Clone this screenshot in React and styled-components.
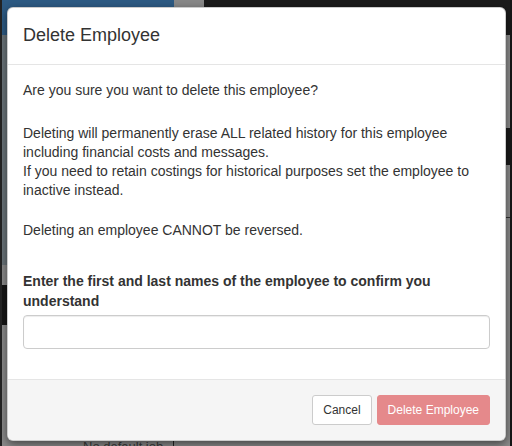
import React from "react";
import styled, { createGlobalStyle } from "styled-components";

const GlobalStyle = createGlobalStyle`
  html, body {
    margin: 0;
    padding: 0;
    overflow: hidden;
  }
  * {
    box-sizing: border-box;
  }
`;

const Page = styled.div`
  position: relative;
  width: 512px;
  height: 446px;
  overflow: hidden;
  display: grid;
  grid-template-rows: 35px 1fr;
  background: #8a8a8a;
  border-left: 2px solid #222;
  border-right: 2px solid #151515;
  font-family: "Liberation Sans", Arial, sans-serif;
`;

const Navbar = styled.div`
  display: flex;
`;

const NavBlock = styled.div`
  width: ${(p) => (p.$width ? `${p.$width}px` : "auto")};
  flex: ${(p) => (p.$width ? "none" : 1)};
  background: ${(p) => p.$tone};
`;

const Main = styled.div`
  display: flex;
  min-height: 0;
`;

const Sidebar = styled.div`
  width: 172px;
  display: flex;
  flex-direction: column;
  border-right: 1px solid #222;
`;

const SideBlock = styled.div`
  height: ${(p) => (p.$height ? `${p.$height}px` : "auto")};
  flex: ${(p) => (p.$height ? "none" : 1)};
  background: ${(p) => p.$tone};
`;

const SideLabel = styled.div`
  padding: 114px 0 0 81px;
  font-size: 13px;
  line-height: 16px;
  color: #3a3a3a;
  white-space: nowrap;
`;

const Content = styled.div`
  flex: 1;
  display: flex;
  flex-direction: column;
  align-items: flex-end;
`;

const EdgeBlock = styled.div`
  width: 6px;
  height: ${(p) => p.$height}px;
  margin-top: ${(p) => p.$top}px;
  background: ${(p) => p.$tone};
`;

const Modal = styled.div`
  position: absolute;
  top: 7px;
  left: 5px;
  width: 499px;
  background: #fff;
  border: 1px solid rgba(0, 0, 0, 0.2);
  border-radius: 6px;
  box-shadow: 0 3px 9px rgba(0, 0, 0, 0.5);
  overflow: hidden;
  color: #333;
`;

const Header = styled.div`
  padding: 15px;
  border-bottom: 1px solid #e5e5e5;
`;

const Title = styled.h4`
  margin: 0;
  font-size: 18px;
  font-weight: normal;
  line-height: 1.42857;
`;

const Body = styled.div`
  padding: 15px;
  font-size: 14px;
  line-height: 20px;
`;

const Para = styled.p`
  margin: 0 0 ${(p) => p.$gap}px;
  line-height: ${(p) => p.$lh || 20}px;
`;

const FormGroup = styled.div`
  margin-bottom: 15px;
`;

const Label = styled.label`
  display: block;
  font-weight: bold;
  margin-bottom: 4px;
`;

const Input = styled.input`
  display: block;
  width: 100%;
  height: 34px;
  padding: 6px 12px;
  font-size: 14px;
  font-family: inherit;
  border: 1px solid #ccc;
  border-radius: 4px;
  box-shadow: inset 0 1px 1px rgba(0, 0, 0, 0.075);
  outline: none;
`;

const Footer = styled.div`
  display: flex;
  justify-content: flex-end;
  gap: 5px;
  padding: 15px;
  background: #f5f5f5;
  border-top: 1px solid #e5e5e5;
`;

const Button = styled.button`
  height: 30px;
  padding: 5px 10px;
  font-size: 12px;
  line-height: 18px;
  font-family: inherit;
  border-radius: 3px;
  border: 1px solid ${(p) => (p.$danger ? "#e5898b" : "#ccc")};
  background: ${(p) => (p.$danger ? "#e5898b" : "#fff")};
  color: ${(p) => (p.$danger ? "#fff" : "#333")};
  cursor: ${(p) => (p.disabled ? "not-allowed" : "pointer")};
`;

const App = () => {
  return (
    <>
      <GlobalStyle />
      <Page>
        <Navbar>
          <NavBlock $width={172} $tone="#2d5a83" />
          <NavBlock $width={30} $tone="#888888" />
          <NavBlock $tone="#1b1b1b" />
        </Navbar>
        <Main>
          <Sidebar>
            <SideBlock $height={230} $tone="#6a7479" />
            <SideBlock $height={20} $tone="#8a8a8a" />
            <SideBlock $height={40} $tone="#151515" />
            <SideBlock $tone="#8a8a8a">
              <SideLabel>No default job</SideLabel>
            </SideBlock>
          </Sidebar>
          <Content>
            <EdgeBlock $top={93} $height={37} $tone="#1a1a1a" />
            <EdgeBlock $top={52} $height={1} $tone="#333" />
          </Content>
        </Main>

        <Modal>
          <Header>
            <Title>Delete Employee</Title>
          </Header>
          <Body>
            <Para $gap={24}>Are you sure you want to delete this employee?</Para>
            <Para $gap={20} $lh={19}>
              Deleting will permanently erase ALL related history for this employee
              including financial costs and messages.
              <br />
              If you need to retain costings for historical purposes set the employee to
              inactive instead.
            </Para>
            <Para $gap={31}>Deleting an employee CANNOT be reversed.</Para>
            <FormGroup>
              <Label>Enter the first and last names of the employee to confirm you understand</Label>
              <Input type="text" />
            </FormGroup>
          </Body>
          <Footer>
            <Button>Cancel</Button>
            <Button $danger disabled>
              Delete Employee
            </Button>
          </Footer>
        </Modal>
      </Page>
    </>
  );
};

export default App;
